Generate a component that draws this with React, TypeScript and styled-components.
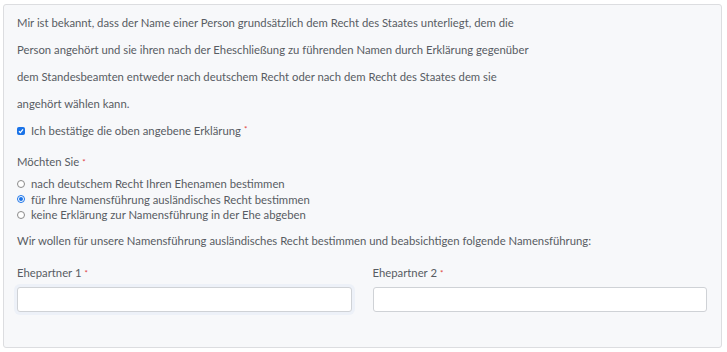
import React from "react";
import styled, { createGlobalStyle } from "styled-components";

const Global = createGlobalStyle`
  html, body { margin: 0; padding: 0; background: #ffffff; }
  body { font-family: "Lato", "Liberation Sans", sans-serif; }
  * { box-sizing: border-box; }
`;

const Panel = styled.div`
  margin: 4px 5px 5px 3px;
  height: 344px;
  background: #f7f8fa;
  border: 1px solid #dcdde0;
  border-radius: 3px;
  padding: 4px 14px 0 13px;
  color: #575c63;
  font-size: 11.3px;
`;

const Intro = styled.p`
  margin: 0;
  line-height: 27px;
`;

const Row = styled.label<{ $h: number }>`
  display: flex;
  align-items: center;
  gap: 6px;
  height: ${(p) => p.$h}px;
  cursor: pointer;
`;

const Box = styled.span<{ $checked?: boolean }>`
  width: 8px;
  height: 8px;
  border-radius: 1.5px;
  background: ${(p) => (p.$checked ? "#1a73e8" : "#fff")};
  border: 1px solid ${(p) => (p.$checked ? "#1a73e8" : "#8a8a8a")};
  display: inline-flex;
  align-items: center;
  justify-content: center;
  flex: none;
`;

const Radio = styled.span<{ $checked?: boolean }>`
  width: 8px;
  height: 8px;
  border-radius: 50%;
  background: #fff;
  border: 1px solid ${(p) => (p.$checked ? "#1a73e8" : "#8a8a8a")};
  display: inline-flex;
  align-items: center;
  justify-content: center;
  flex: none;
  &::after {
    content: "";
    width: 4px;
    height: 4px;
    border-radius: 50%;
    background: ${(p) => (p.$checked ? "#1a73e8" : "transparent")};
  }
`;

const Req = styled.span`
  color: #e04040;
  font-size: 8px;
  vertical-align: top;
  margin-left: 3px;
`;

const Section = styled.div<{ $top: number }>`
  margin-top: ${(p) => p.$top}px;
`;

const Question = styled.div`
  height: 16px;
  line-height: 16px;
  margin-bottom: 6px;
`;

const Text = styled.div`
  line-height: 16px;
`;

const Grid = styled.div`
  display: grid;
  grid-template-columns: 1fr 1fr;
  column-gap: 21px;
  margin-top: 16px;
`;

const Field = styled.div`
  display: flex;
  flex-direction: column;
`;

const FieldLabel = styled.div`
  height: 16px;
  line-height: 16px;
  margin-bottom: 6px;
`;

const Input = styled.input<{ $halo?: boolean }>`
  height: 25px;
  border: 1px solid #cfd2d6;
  border-radius: 3px;
  background: #fff;
  padding: 0 8px;
  font: inherit;
  outline: none;
  box-shadow: ${(p) => (p.$halo ? "0 0 0 3px rgba(205, 220, 240, 0.22)" : "none")};
`;

const Check = () => (
  <svg width="6" height="6" viewBox="0 0 6 6">
    <path d="M1 3.2 L2.4 4.6 L5 1.4" fill="none" stroke="#fff" strokeWidth="1.3" />
  </svg>
);

export default function App() {
  return (
    <>
      <Global />
      <Panel>
        <Intro>
          Mir ist bekannt, dass der Name einer Person grundsätzlich dem Recht des Staates unterliegt, dem die
          <br />
          Person angehört und sie ihren nach der Eheschließung zu führenden Namen durch Erklärung gegenüber
          <br />
          dem Standesbeamten entweder nach deutschem Recht oder nach dem Recht des Staates dem sie
          <br />
          angehört wählen kann.
        </Intro>
        <Row $h={27}>
          <Box $checked>
            <Check />
          </Box>
          <span>
            Ich bestätige die oben angebene Erklärung<Req>*</Req>
          </span>
        </Row>
        <Section $top={10}>
          <Question>
            Möchten Sie<Req>*</Req>
          </Question>
          <Row $h={15.5}>
            <Radio />
            <span>nach deutschem Recht Ihren Ehenamen bestimmen</span>
          </Row>
          <Row $h={15.5}>
            <Radio $checked />
            <span>für Ihre Namensführung ausländisches Recht bestimmen</span>
          </Row>
          <Row $h={15.5}>
            <Radio />
            <span>keine Erklärung zur Namensführung in der Ehe abgeben</span>
          </Row>
        </Section>
        <Section $top={10}>
          <Text>Wir wollen für unsere Namensführung ausländisches Recht bestimmen und beabsichtigen folgende Namensführung:</Text>
        </Section>
        <Grid>
          <Field>
            <FieldLabel>
              Ehepartner 1<Req>*</Req>
            </FieldLabel>
            <Input $halo />
          </Field>
          <Field>
            <FieldLabel>
              Ehepartner 2<Req>*</Req>
            </FieldLabel>
            <Input />
          </Field>
        </Grid>
      </Panel>
    </>
  );
}
